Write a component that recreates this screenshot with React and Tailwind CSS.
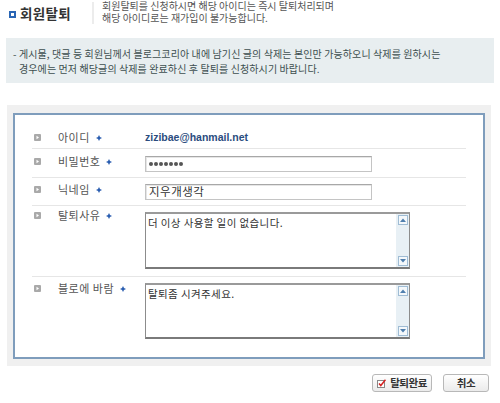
import React from "react";

const KR = { fontFamily: '"Noto Sans CJK KR", "Noto Sans", sans-serif' };

function Bullet() {
  return (
    <svg width="7" height="7" viewBox="0 0 7 7" className="shrink-0">
      <rect x="0" y="0" width="7" height="7" rx="1" fill="#a9a9a9" />
      <path d="M2.5 1.8 L5 3.5 L2.5 5.2 Z" fill="#fff" />
    </svg>
  );
}

function Plus() {
  return (
    <svg width="6" height="6" viewBox="0 0 6 6" className="ml-[6px] mt-[1px]">
      <path d="M3 0 L4 2 L6 3 L4 4 L3 6 L2 4 L0 3 L2 2 Z" fill="#2a5db0" />
    </svg>
  );
}

function Label({ children }) {
  return (
    <div className="flex items-center h-[14px]">
      <div className="w-[26px] pl-[2px] flex items-center">
        <Bullet />
      </div>
      <span className="text-[11px] leading-[14px] tracking-[0.5px] text-[#555] whitespace-pre">{children}</span>
      <Plus />
    </div>
  );
}

function ArrowBtn({ up }) {
  return (
    <div className="w-[10px] h-[10px] border border-[#9fbcd4] bg-[#f4f8fb] flex items-center justify-center">
      <svg width="6" height="4" viewBox="0 0 6 4">
        {up ? <path d="M0 4 L3 0.5 L6 4 Z" fill="#4f7fae" /> : <path d="M0 0 L3 3.5 L6 0 Z" fill="#4f7fae" />}
      </svg>
    </div>
  );
}

function FakeTextarea({ text, h }) {
  return (
    <div className={`w-[265px] ${h} border border-[#8c8c8c] border-b-2 border-b-[#7a7a7a] border-t-2 border-t-[#9a9a9a] bg-white flex`}>
      <div className="flex-1 pl-[2px] pt-[2px] text-[10.5px] leading-[14px] tracking-[0.4px] text-[#333]">{text}</div>
      <div className="w-[13px] bg-[#e8f0f5] flex flex-col justify-between items-center py-[1px]">
        <ArrowBtn up />
        <ArrowBtn />
      </div>
    </div>
  );
}

function Input({ children, dots }) {
  return (
    <div className="w-[227px] h-[16px] border border-[#c4c4c4] border-t-[#a8a8a8] shadow-[inset_1px_1px_0_#e6e6e6] bg-white flex items-center pl-[3px]">
      {dots ? (
        <div className="flex gap-[1.5px]">
          {[0, 1, 2, 3, 4, 5, 6].map((i) => (
            <div key={i} className="w-[3.5px] h-[3.5px] rounded-full bg-[#555]" />
          ))}
        </div>
      ) : (
        <span className="text-[11.5px] tracking-[0.5px] text-[#333] leading-none">{children}</span>
      )}
    </div>
  );
}

export default function App() {
  return (
    <div className="w-[500px] h-[403px] bg-white overflow-hidden" style={KR}>
      {/* header */}
      <div className="flex h-[26px]">
        <div className="w-[92px] flex items-center pl-[9px] pt-[2px]">
          <div className="w-[7px] h-[7px] bg-[#2a66b5] flex items-center justify-center">
            <div className="w-[3px] h-[3px] bg-white" />
          </div>
          <span className="ml-[4px] text-[13.5px] font-bold tracking-[0.3px] text-[#333] leading-none">회원탈퇴</span>
        </div>
        <div className="w-[2px] h-[22px] mt-[2px] bg-[#ececec]" />
        <div className="ml-[8px] text-[10px] leading-[12px] tracking-[0px] text-[#555] pt-[0px]">
          <div>회원탈퇴를 신청하시면 해당 아이디는 즉시 탈퇴처리되며</div>
          <div>해당 아이디로는 재가입이 불가능합니다.</div>
        </div>
      </div>

      {/* notice */}
      <div className="mt-[12px] mx-[6px] h-[45px] bg-[#e8eef0] pl-[7px] pt-[8px] text-[10px] leading-[15px] tracking-[0.1px] text-[#3d4f4f]">
        <div>- 게시물, 댓글 등 회원님께서 블로그코리아 내에 남기신 글의 삭제는 본인만 가능하오니 삭제를 원하시는</div>
        <div className="pl-[6px]">경우에는 먼저 해당글의 삭제를 완료하신 후 탈퇴를 신청하시기 바랍니다.</div>
      </div>

      {/* form */}
      <div className="mt-[22px] ml-[7px] w-[484px] h-[261px] bg-[#f0f0f0] pt-[8px] pl-[6px]">
        <div className="w-[472px] h-[246px] border-2 border-[#7f9dbc] bg-white px-[17px]">
          <div className="h-[34px] border-b border-[#e6e6e6] flex pt-[15px]">
            <div className="w-[113px]"><Label>아이디</Label></div>
            <div className="text-[10.5px] font-bold leading-[14px] text-[#2b4c7e]" style={{ fontFamily: '"Liberation Sans", Arial, sans-serif' }}>
              zizibae@hanmail.net
            </div>
          </div>
          <div className="h-[29px] border-b border-[#e6e6e6] flex">
            <div className="w-[113px] pt-[5px]"><Label>비밀번호</Label></div>
            <div className="pt-[7px]"><Input dots /></div>
          </div>
          <div className="h-[28px] border-b border-[#e6e6e6] flex">
            <div className="w-[113px] pt-[4px]"><Label>닉네임</Label></div>
            <div className="pt-[6px]"><Input>지우개생각</Input></div>
          </div>
          <div className="h-[71px] border-b border-[#e6e6e6] flex">
            <div className="w-[113px] pt-[2px]"><Label>탈퇴사유</Label></div>
            <div className="pt-[6px]"><FakeTextarea h="h-[57px]" text="더 이상 사용할 일이 없습니다." /></div>
          </div>
          <div className="flex">
            <div className="w-[113px] pt-[4px]"><Label>블로에 바람</Label></div>
            <div className="pt-[6px]"><FakeTextarea h="h-[56px]" text="탈퇴좀 시켜주세요." /></div>
          </div>
        </div>
      </div>

      {/* buttons */}
      <div className="mt-[8px] flex justify-end pr-[11px] gap-[11px]">
        <div className="w-[60px] h-[18px] rounded-[3px] border border-[#b8b8b8] bg-gradient-to-b from-white to-[#ebebeb] flex items-center justify-center gap-[4px]">
          <svg width="9" height="9" viewBox="0 0 9 9">
            <rect x="0.5" y="1.5" width="7" height="7" fill="#fff" stroke="#888" strokeWidth="1" />
            <path d="M2 4.5 L3.8 6.5 L8.5 0.8" fill="none" stroke="#d42020" strokeWidth="1.5" />
          </svg>
          <span className="text-[10.5px] font-bold tracking-[-0.5px] text-[#333] leading-none">탈퇴완료</span>
        </div>
        <div className="w-[46px] h-[18px] rounded-[3px] border border-[#b8b8b8] bg-gradient-to-b from-white to-[#ebebeb] flex items-center justify-center">
          <span className="text-[10.5px] font-bold tracking-[-0.5px] text-[#333] leading-none">취소</span>
        </div>
      </div>
    </div>
  );
}
